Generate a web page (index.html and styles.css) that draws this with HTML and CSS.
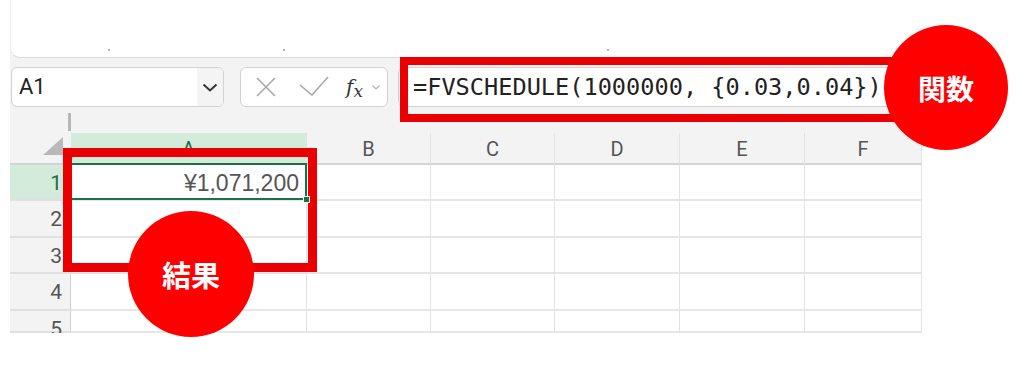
FILE: index.html
```html
<!DOCTYPE html>
<html lang="ja">
<head>
  <meta charset="UTF-8" />
  <title>FVSCHEDULE</title>
  <link rel="stylesheet" href="styles.css">
</head>
<body>

  <div class="page">
    <!-- リボンの下端 -->
    <div class="ribbon">
      <span class="dot dot1"></span>
      <span class="dot dot2"></span>
      <span class="dot dot3"></span>
    </div>

    <!-- 名前ボックス + 数式バー -->
    <div class="toolbar">
      <div class="namebox">
        <span class="name">A1</span>
        <span class="drop">
          <svg width="16" height="9" viewBox="0 0 16 9"><path d="M1.5 1.5 L8 7.5 L14.5 1.5" fill="none" stroke="#333" stroke-width="2"/></svg>
        </span>
      </div>
      <div class="fxbox">
        <svg class="ico-x" width="22" height="22" viewBox="0 0 22 22"><path d="M2 2 L20 20 M20 2 L2 20" stroke="#a8a8a8" stroke-width="1.6" fill="none"/></svg>
        <svg class="ico-ok" width="30" height="20" viewBox="0 0 30 20"><path d="M1 9 L13 19 L29 1" stroke="#a8a8a8" stroke-width="1.6" fill="none"/></svg>
        <span class="fx">f<span class="fx-x">x</span></span>
        <svg class="ico-more" width="8" height="5" viewBox="0 0 8 5"><path d="M0.5 0.5 L4 4 L7.5 0.5" stroke="#b0b0b0" stroke-width="1.2" fill="none"/></svg>
      </div>
      <div class="formula">=FVSCHEDULE(1000000, {0.03,0.04})</div>
    </div>
    <div class="splitter"><span class="bar"></span></div>

    <!-- シート -->
    <div class="sheet">
      <div class="corner"><span class="tri"></span></div>
      <div class="colhead sel">A</div>
      <div class="colhead">B</div>
      <div class="colhead">C</div>
      <div class="colhead">D</div>
      <div class="colhead">E</div>
      <div class="colhead">F</div>

      <div class="rowhead sel">1</div>
      <div class="cell active">¥1,071,200</div>
      <div class="cell"></div><div class="cell"></div><div class="cell"></div><div class="cell"></div><div class="cell"></div>

      <div class="rowhead">2</div>
      <div class="cell"></div><div class="cell"></div><div class="cell"></div><div class="cell"></div><div class="cell"></div><div class="cell"></div>

      <div class="rowhead">3</div>
      <div class="cell"></div><div class="cell"></div><div class="cell"></div><div class="cell"></div><div class="cell"></div><div class="cell"></div>

      <div class="rowhead">4</div>
      <div class="cell"></div><div class="cell"></div><div class="cell"></div><div class="cell"></div><div class="cell"></div><div class="cell"></div>

      <div class="rowhead">5</div>
      <div class="cell"></div><div class="cell"></div><div class="cell"></div><div class="cell"></div><div class="cell"></div><div class="cell"></div>
    </div>
  </div>

  <!-- 注釈 -->
  <div class="mark mark-formula"></div>
  <div class="bubble bubble-fn">関数</div>
  <div class="mark mark-result"></div>
  <div class="bubble bubble-res">結果</div>

</body>
</html>
```

FILE: styles.css
```css
body {
  margin: 0;
  background: #fff;
  font-family: Roboto, 'Liberation Sans', sans-serif;
  position: relative;
  height: 369px;
  overflow: hidden;
}

.page {
  margin-left: 10px;
  width: 912px;
  background: #f3f3f3;
}

.ribbon {
  height: 58px;
  box-sizing: border-box;
  background: #fff;
  border-bottom: 1px solid #dadada;
  border-left: 1px solid #ececec;
  border-bottom-left-radius: 10px;
  display: flex;
  align-items: flex-end;
  padding-bottom: 6px;
}

.dot {
  width: 2px;
  height: 2px;
  background: #b5b5b5;
}
.dot1 { margin-left: 97px; }
.dot2 { margin-left: 173px; }
.dot3 { margin-left: 322px; }

.toolbar {
  display: flex;
  padding: 9px 0 6px 1px;
  height: 40px;
}

.namebox {
  width: 213px;
  box-sizing: border-box;
  border: 1px solid #d2d2d2;
  border-radius: 6px;
  background: #fff;
  display: flex;
  overflow: hidden;
}

.name {
  flex: 1;
  padding-left: 7px;
  font-size: 22px;
  line-height: 38px;
  color: #222;
}

.drop {
  width: 26px;
  background: #f4f4f4;
  display: flex;
  align-items: center;
  justify-content: center;
}

.fxbox {
  width: 148px;
  margin-left: 16px;
  box-sizing: border-box;
  border: 1px solid #d2d2d2;
  border-radius: 6px;
  background: #fff;
  display: flex;
  align-items: center;
  padding-left: 14px;
}

.ico-ok { margin-left: 22px; margin-top: -2px; }

.fx {
  margin-left: 17px;
  font-family: 'DejaVu Serif', serif;
  font-style: italic;
  font-size: 20px;
  color: #333;
}
.fx-x {
  font-size: 17px;
  position: relative;
  top: 3px;
}

.ico-more { margin-left: 9px; }

.formula {
  flex: 1;
  margin-left: 10px;
  box-sizing: border-box;
  border: 1px solid #d2d2d2;
  border-radius: 6px;
  background: #fff;
  padding-left: 14px;
  font-family: 'DejaVu Sans Mono', monospace;
  font-size: 23.6px;
  line-height: 38px;
  color: #222;
  white-space: nowrap;
}

.splitter {
  height: 20px;
}
.splitter .bar {
  display: block;
  margin-left: 58px;
  width: 3px;
  height: 18px;
  background: #b7b7b7;
}

.sheet {
  display: grid;
  grid-template-columns: 61px 236px 124px 124px 125px 125px 117px;
  grid-template-rows: 32px 36px 37px 36px 37px 22px;
  overflow: hidden;
}

.corner {
  background: #f3f3f3;
  border-bottom: 2px solid #d4d4d4;
  display: flex;
  justify-content: flex-end;
  align-items: flex-end;
  padding: 0 8px 8px 0;
}

.tri {
  width: 0;
  height: 0;
  border-left: 20px solid transparent;
  border-bottom: 18px solid #b9b9b9;
}

.colhead {
  background: #f3f3f3;
  border-right: 1px solid #e2e2e2;
  border-bottom: 2px solid #d4d4d4;
  text-align: center;
  font-size: 20px;
  line-height: 32px;
  color: #555;
}

.colhead.sel {
  background: #d2ebdb;
  color: #1f6b3e;
  border-bottom-color: #1e7145;
}

.rowhead {
  background: #f3f3f3;
  border-bottom: 2px solid #e0e0e0;
  border-right: 1px solid #cfcfcf;
  text-align: right;
  padding-right: 8px;
  font-size: 21px;
  line-height: 36px;
  color: #555;
}

.rowhead.sel {
  background: #d2ebdb;
  color: #1e7145;
  border-right-color: #1e7145;
}

.cell {
  background: #fff;
  border-right: 1px solid #e3e3e3;
  border-bottom: 2px solid #e6e6e6;
}

.cell.active {
  position: relative;
  text-align: right;
  padding-right: 7px;
  font-family: 'Liberation Sans', sans-serif;
  font-size: 23px;
  line-height: 36px;
  color: #555;
}

.cell.active::after {
  content: "";
  position: absolute;
  top: -2px;
  bottom: -1px;
  left: -2px;
  right: -1px;
  border: 2px solid #1e7145;
}

.cell.active::before {
  content: "";
  position: absolute;
  right: -4px;
  bottom: -4px;
  width: 5px;
  height: 5px;
  background: #1e7145;
  border: 1px solid #fff;
  z-index: 1;
}

/* 注釈 */
.mark {
  position: absolute;
  box-sizing: border-box;
  border-style: solid;
  border-color: #ea0000;
}

.mark-formula {
  left: 400px;
  top: 57px;
  width: 520px;
  height: 65px;
  border-width: 8px;
}

.mark-result {
  left: 63px;
  top: 148px;
  width: 254px;
  height: 124px;
  border-width: 9px;
}

.bubble {
  position: absolute;
  border-radius: 50%;
  background: #ff0000;
  color: #fff;
  font-family: 'Noto Sans CJK JP', sans-serif;
  font-weight: 700;
  display: flex;
  align-items: center;
  justify-content: center;
}

.bubble-fn {
  left: 884px;
  top: 25px;
  width: 124px;
  height: 125px;
  font-size: 28px;
}

.bubble-res {
  left: 128px;
  top: 211px;
  width: 126px;
  height: 126px;
  font-size: 29px;
}
```
